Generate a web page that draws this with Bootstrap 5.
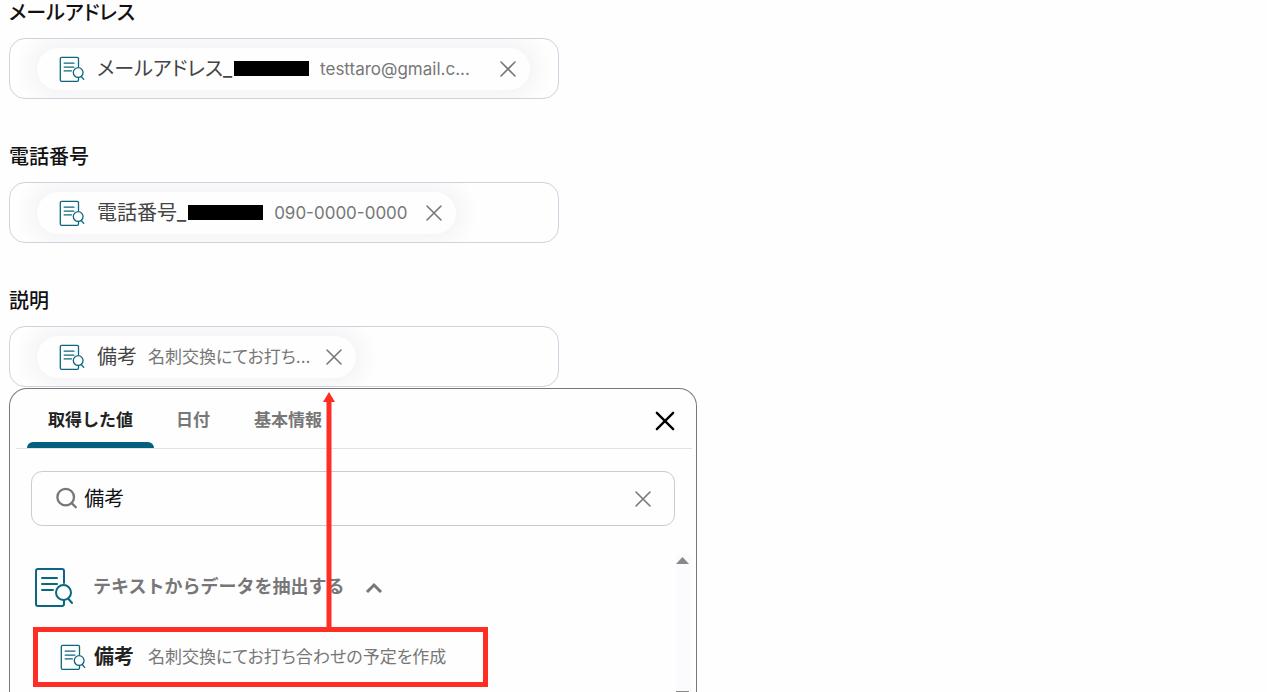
<!DOCTYPE html>
<html lang="ja">
<head>
<meta charset="utf-8">
<meta name="viewport" content="width=device-width, initial-scale=1">
<title>予定の作成</title>
<link href="https://cdn.jsdelivr.net/npm/bootstrap@5.3.0/dist/css/bootstrap.min.css" rel="stylesheet">
<style>
  body {
    font-family: Inter, "Noto Sans CJK JP", sans-serif;
    font-feature-settings: "palt";
    font-size: 17px;
    line-height: 26px;
    color: #222;
    background: #fefefe;
    padding: 0 9px;
  }
  .field-block { max-width: 550px; margin-bottom: 45px; }
  .field-block.is-open { margin-bottom: 1px; }
  .field-title { font-size: 20px; line-height: 26px; font-weight: 500; color: #111; margin-bottom: 12px; }
  .value-box {
    height: 61px;
    padding-left: 27px;
    border: 1px solid #d0d2e0;
    border-radius: 16px;
    overflow: hidden;
  }
  .chip {
    height: 42px;
    padding: 0 10px 0 22px;
    border-radius: 21px;
    background: #fefefe;
    box-shadow: 0 0 20px 6px rgba(90, 70, 110, .07);
  }
  .chip-name { font-size: 20px; color: #444; margin-left: 12px; }
  .chip-value { color: #777; margin: 0 11px; }
  .chip-value.is-mail { min-width: 165px; }
  .chip-value.is-phone { min-width: 137px; }
  .redacted { width: 75px; height: 15px; margin-left: 2px; background: #000; }
  .plain-btn { padding: 0; border: 0; background: none; color: #777; line-height: 0; }
  .icon-teal { color: #0b6680; flex-shrink: 0; }

  .picker {
    max-width: 688px;
    min-height: 0;
    border: 1px solid #777;
    border-bottom: 0;
    border-radius: 18px 18px 0 0;
    background: #fefefe;
  }
  .picker-head { height: 60px; margin: 0 4px 0 6px; padding: 0 13px 0 11px; border-bottom: 1px solid #e2e2e4; }
  .picker-tab {
    padding: 8px 21px 0;
    border: 0;
    border-bottom: 6px solid transparent;
    background: none;
    color: #777;
    font-weight: 700;
    position: relative;
  }
  .picker-tab + .picker-tab { padding-left: 22px; padding-right: 22px; }
  .picker-tab.active { color: #222; }
  .picker-tab.active::after {
    content: "";
    position: absolute;
    inset: auto 0 -6px;
    height: 6px;
    border-radius: 6px 6px 0 0;
    background: #056080;
  }
  .search-box {
    height: 55px;
    margin: 22px 21px 0;
    padding: 0 19px 0 24px;
    border: 1px solid #ccc;
    border-radius: 11px;
  }
  .search-box .form-control {
    padding: 0 0 0 6px;
    border: 0;
    background: none;
    box-shadow: none;
    font-size: 20px;
    color: #111;
    font-feature-settings: inherit;
  }
  .results { margin: 28px 4px 0 23px; min-height: 0; }
  .group-btn { padding: 13px 0 0 1px; color: #777; font-size: 18px; font-weight: 700; }
  .group-btn .group-name { line-height: 40px; margin: 0 21px 0 19px; }
  .result-row {
    max-width: 455px;
    height: 60px;
    margin-top: 20px;
    padding-left: 22px;
    border: 5px solid #ff2e24;
    position: relative;
  }
  .result-name { font-size: 20px; font-weight: 700; color: #222; margin-left: 8px; }
  .result-value { color: #777; margin-left: 14px; }
  .pointer { position: absolute; left: 285px; bottom: 100%; }
  .track { width: 16px; background: #fbfafc; color: #888; overflow: hidden; }
  .track-thumb { width: 13px; height: 1px; background: #888; }
</style>
</head>
<body class="d-flex flex-column vh-100 overflow-hidden">

<svg class="d-none">
  <symbol id="doc-search" viewBox="0 0 40 40" fill="none" stroke="currentColor" stroke-linecap="round" stroke-linejoin="round">
    <path d="M30 16V4a2 2 0 0 0-2-2H4a2 2 0 0 0-2 2v33a2 2 0 0 0 2 2h24a2 2 0 0 0 2-2v-4"/>
    <path d="M8 11h15M8 17h15M8 23h11"/>
    <circle cx="29.500" cy="25.500" r="7.500"/>
    <path d="M34.500 32l3.500 4"/>
  </symbol>
  <symbol id="cross" viewBox="0 0 24 24" fill="none" stroke="currentColor" stroke-linecap="round">
    <path d="M5 5l14 14M19 5L5 19"/>
  </symbol>
</svg>

<section class="field-block w-100 flex-shrink-0">
  <h2 class="field-title">メールアドレス</h2>
  <div class="value-box d-flex align-items-center">
    <div class="chip d-inline-flex align-items-center text-nowrap">
      <svg class="icon-teal" width="26" height="26" stroke-width="2"><use href="#doc-search"/></svg>
      <span class="chip-name">メールアドレス_</span><span class="redacted"></span>
      <span class="chip-value is-mail">testtaro@gmail.c...</span>
      <button class="plain-btn" type="button" aria-label="メールアドレスを削除"><svg width="24" height="24" stroke-width="1.600"><use href="#cross"/></svg></button>
    </div>
  </div>
</section>

<section class="field-block w-100 flex-shrink-0">
  <h2 class="field-title">電話番号</h2>
  <div class="value-box d-flex align-items-center">
    <div class="chip d-inline-flex align-items-center text-nowrap">
      <svg class="icon-teal" width="26" height="26" stroke-width="2"><use href="#doc-search"/></svg>
      <span class="chip-name">電話番号_</span><span class="redacted"></span>
      <span class="chip-value is-phone">090-0000-0000</span>
      <button class="plain-btn" type="button" aria-label="電話番号を削除"><svg width="24" height="24" stroke-width="1.600"><use href="#cross"/></svg></button>
    </div>
  </div>
</section>

<section class="field-block is-open w-100 flex-shrink-0">
  <h2 class="field-title">説明</h2>
  <div class="value-box d-flex align-items-center">
    <div class="chip d-inline-flex align-items-center text-nowrap">
      <svg class="icon-teal" width="26" height="26" stroke-width="2"><use href="#doc-search"/></svg>
      <span class="chip-name">備考</span>
      <span class="chip-value">名刺交換にてお打ち...</span>
      <button class="plain-btn" type="button" aria-label="備考を削除"><svg width="24" height="24" stroke-width="1.600"><use href="#cross"/></svg></button>
    </div>
  </div>
</section>

<section class="picker w-100 d-flex flex-column flex-grow-1">
  <div class="picker-head d-flex flex-shrink-0">
    <div class="d-flex" role="tablist">
      <button class="picker-tab active" type="button" role="tab" aria-selected="true">取得した値</button>
      <button class="picker-tab" type="button" role="tab" aria-selected="false">日付</button>
      <button class="picker-tab" type="button" role="tab" aria-selected="false">基本情報</button>
    </div>
    <button class="plain-btn ms-auto pt-1 text-black" type="button" aria-label="閉じる"><svg width="28" height="28" stroke-width="2"><use href="#cross"/></svg></button>
  </div>

  <div class="search-box d-flex align-items-center flex-shrink-0">
    <svg width="24" height="24" viewBox="0 0 24 24" fill="none" stroke="#777" stroke-width="2.500" stroke-linecap="round" aria-hidden="true">
      <circle cx="10.500" cy="10" r="9"/><path d="M17 16.500L21.500 21"/>
    </svg>
    <input class="form-control" type="text" value="備考" aria-label="検索">
    <button class="plain-btn" type="button" aria-label="検索語を消去"><svg width="24" height="24" stroke-width="1.600"><use href="#cross"/></svg></button>
  </div>

  <div class="results d-flex flex-grow-1">
    <div class="flex-grow-1">
      <button class="plain-btn group-btn d-flex align-items-center" type="button" aria-expanded="true">
        <svg class="icon-teal" width="40" height="40" stroke-width="2"><use href="#doc-search"/></svg>
        <span class="group-name">テキストからデータを抽出する</span>
        <svg width="18" height="12" viewBox="0 0 18 12" fill="none" stroke="currentColor" stroke-width="3"><path d="M2 11l7-7 7 7"/></svg>
      </button>
      <div class="result-row d-flex align-items-center text-nowrap">
        <svg class="icon-teal" width="26" height="26" stroke-width="2"><use href="#doc-search"/></svg>
        <span class="result-name">備考</span>
        <span class="result-value">名刺交換にてお打ち合わせの予定を作成</span>
        <svg class="pointer" width="12" height="240" viewBox="0 0 12 240" fill="#ff2e24" aria-hidden="true">
          <path d="M6 0l6 10H8.500v230h-5V10H0z"/>
        </svg>
      </div>
    </div>
    <div class="track d-flex flex-column justify-content-between">
      <svg class="d-block" width="13" height="11" viewBox="0 0 13 11" fill="currentColor" aria-hidden="true"><path d="M0 10l6.500-7 6.500 7z"/></svg>
      <div class="track-thumb"></div>
    </div>
  </div>
</section>

<script src="https://cdn.jsdelivr.net/npm/bootstrap@5.3.0/dist/js/bootstrap.bundle.min.js"></script>
</body>
</html>
